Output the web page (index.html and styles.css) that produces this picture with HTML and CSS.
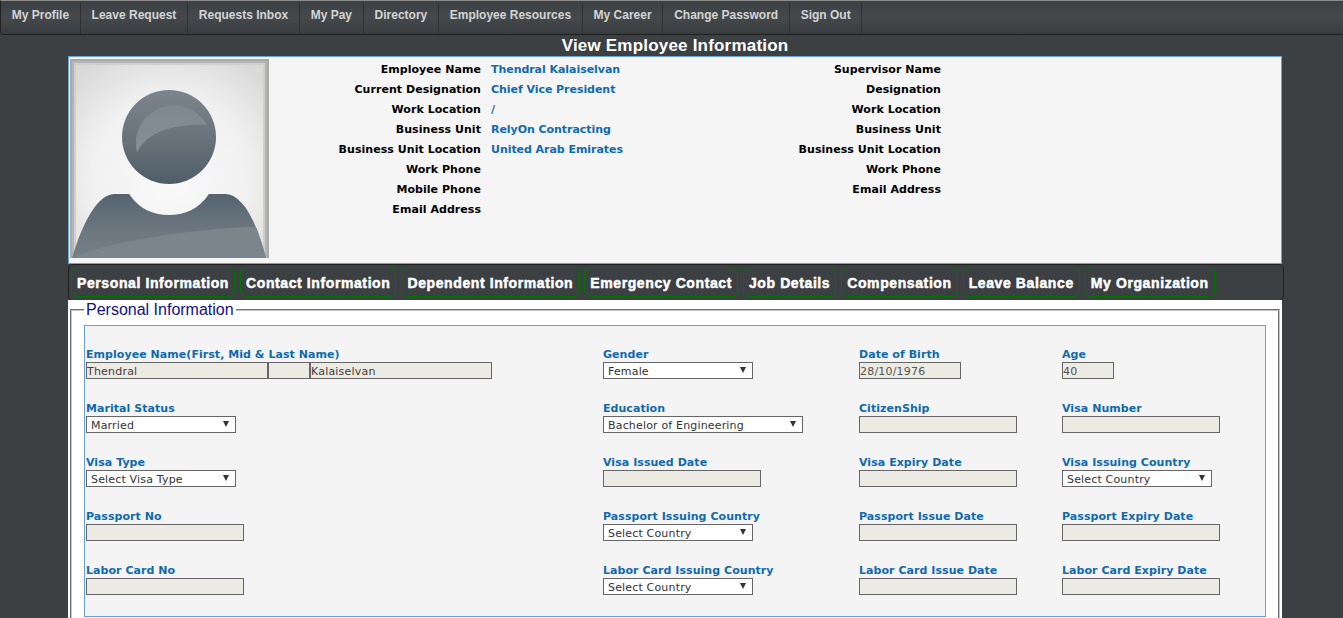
FILE: index.html
```html
<!DOCTYPE html>
<html lang="en">
<head>
<meta charset="utf-8">
<title>View Employee Information</title>
<link rel="stylesheet" href="styles.css">
</head>
<body>
<nav class="topnav">
  <a class="nav-item">My Profile</a>
  <a class="nav-item">Leave Request</a>
  <a class="nav-item">Requests Inbox</a>
  <a class="nav-item">My Pay</a>
  <a class="nav-item">Directory</a>
  <a class="nav-item">Employee Resources</a>
  <a class="nav-item">My Career</a>
  <a class="nav-item">Change Password</a>
  <a class="nav-item">Sign Out</a>
</nav>
<h1 class="page-title">View Employee Information</h1>
<main class="wrap">
  <section class="summary">
    <svg class="avatar" viewBox="0 0 199 199" role="img" aria-label="Employee photo placeholder">
      <defs>
        <radialGradient id="bg" cx="50%" cy="58%" r="70%">
          <stop offset="0" stop-color="#fafafa"/>
          <stop offset="0.6" stop-color="#f1f1f1"/>
          <stop offset="1" stop-color="#dadada"/>
        </radialGradient>
        <linearGradient id="head" x1="0" y1="0" x2="0" y2="1">
          <stop offset="0" stop-color="#7c858c"/>
          <stop offset="0.45" stop-color="#6b757d"/>
          <stop offset="1" stop-color="#505d68"/>
        </linearGradient>
        <linearGradient id="shine" x1="0" y1="0" x2="0" y2="1">
          <stop offset="0" stop-color="#7f8890"/>
          <stop offset="1" stop-color="#868f95"/>
        </linearGradient>
        <linearGradient id="body" x1="0" y1="0" x2="0" y2="1">
          <stop offset="0" stop-color="#56636e"/>
          <stop offset="0.6" stop-color="#6d7881"/>
          <stop offset="1" stop-color="#747e87"/>
        </linearGradient>
        <clipPath id="bodyClip">
          <path d="M2 199C14 160 28 136 44 135H59C70 151 84 156 99 156C114 156 128 151 139 135H156C172 136 186 160 196 199Z"/>
        </clipPath>
      </defs>
      <rect width="199" height="199" fill="#a9a9a7"/>
      <rect x="2" y="2" width="195" height="197" fill="#b5b5b4"/>
      <rect x="4" y="4" width="191" height="195" fill="#cfcfce"/>
      <rect x="6" y="6" width="187" height="193" fill="url(#bg)"/>
      <circle cx="99" cy="78" r="47" fill="url(#head)"/>
      <path d="M67 94C74 76 100 64 137 66A38 38 0 0 0 67 94Z" fill="url(#shine)"/>
      <path d="M2 199C14 160 28 136 44 135H59C70 151 84 156 99 156C114 156 128 151 139 135H156C172 136 186 160 196 199Z" fill="url(#body)"/>
      <path d="M0 199C50 180 120 170 199 167V199Z" fill="#7b858c" clip-path="url(#bodyClip)"/>
    </svg>
    <div class="info-list">
      <span class="info-label">Employee Name</span><span class="info-value">Thendral Kalaiselvan</span>
      <span class="info-label">Current Designation</span><span class="info-value">Chief Vice President</span>
      <span class="info-label">Work Location</span><span class="info-value">/</span>
      <span class="info-label">Business Unit</span><span class="info-value">RelyOn Contracting</span>
      <span class="info-label">Business Unit Location</span><span class="info-value">United Arab Emirates</span>
      <span class="info-label">Work Phone</span><span class="info-value"></span>
      <span class="info-label">Mobile Phone</span><span class="info-value"></span>
      <span class="info-label">Email Address</span><span class="info-value"></span>
    </div>
    <div class="info-list">
      <span class="info-label">Supervisor Name</span><span class="info-value"></span>
      <span class="info-label">Designation</span><span class="info-value"></span>
      <span class="info-label">Work Location</span><span class="info-value"></span>
      <span class="info-label">Business Unit</span><span class="info-value"></span>
      <span class="info-label">Business Unit Location</span><span class="info-value"></span>
      <span class="info-label">Work Phone</span><span class="info-value"></span>
      <span class="info-label">Email Address</span><span class="info-value"></span>
    </div>
  </section>
  <div class="tabs">
    <a class="tab">Personal Information</a>
    <a class="tab">Contact Information</a>
    <a class="tab">Dependent Information</a>
    <a class="tab">Emergency Contact</a>
    <a class="tab">Job Details</a>
    <a class="tab">Compensation</a>
    <a class="tab">Leave Balance</a>
    <a class="tab">My Organization</a>
  </div>
  <section class="panel">
    <fieldset class="group">
      <legend class="group-title">Personal Information</legend>
      <div class="form-grid">
        <div class="field">
          <label class="field-label">Employee Name(First, Mid &amp; Last Name)</label>
          <div class="name-row">
            <input class="text-input name-first" value="Thendral">
            <input class="text-input name-mid" value="">
            <input class="text-input name-last" value="Kalaiselvan">
          </div>
        </div>
        <div class="field"><label class="field-label">Gender</label><div class="select w150"><span>Female</span><i class="arrow"></i></div></div>
        <div class="field"><label class="field-label">Date of Birth</label><input class="text-input w102" value="28/10/1976"></div>
        <div class="field"><label class="field-label">Age</label><input class="text-input w52" value="40"></div>

        <div class="field"><label class="field-label">Marital Status</label><div class="select w150"><span>Married</span><i class="arrow"></i></div></div>
        <div class="field"><label class="field-label">Education</label><div class="select w200"><span>Bachelor of Engineering</span><i class="arrow"></i></div></div>
        <div class="field"><label class="field-label">CitizenShip</label><input class="text-input w158"></div>
        <div class="field"><label class="field-label">Visa Number</label><input class="text-input w158"></div>

        <div class="field"><label class="field-label">Visa Type</label><div class="select w150"><span>Select Visa Type</span><i class="arrow"></i></div></div>
        <div class="field"><label class="field-label">Visa Issued Date</label><input class="text-input w158"></div>
        <div class="field"><label class="field-label">Visa Expiry Date</label><input class="text-input w158"></div>
        <div class="field"><label class="field-label">Visa Issuing Country</label><div class="select w150"><span>Select Country</span><i class="arrow"></i></div></div>

        <div class="field"><label class="field-label">Passport No</label><input class="text-input w158"></div>
        <div class="field"><label class="field-label">Passport Issuing Country</label><div class="select w150"><span>Select Country</span><i class="arrow"></i></div></div>
        <div class="field"><label class="field-label">Passport Issue Date</label><input class="text-input w158"></div>
        <div class="field"><label class="field-label">Passport Expiry Date</label><input class="text-input w158"></div>

        <div class="field"><label class="field-label">Labor Card No</label><input class="text-input w158"></div>
        <div class="field"><label class="field-label">Labor Card Issuing Country</label><div class="select w150"><span>Select Country</span><i class="arrow"></i></div></div>
        <div class="field"><label class="field-label">Labor Card Issue Date</label><input class="text-input w158"></div>
        <div class="field"><label class="field-label">Labor Card Expiry Date</label><input class="text-input w158"></div>
      </div>
    </fieldset>
  </section>
</main>
</body>
</html>
```
FILE: styles.css
```css
* { box-sizing: border-box; }
html, body { height: 618px; overflow: hidden; }
body {
  margin: 0;
  background: #3c4043;
  font-family: "DejaVu Sans", Verdana, sans-serif;
  font-size: 11px;
}
.topnav {
  display: flex;
  height: 35px;
  padding-top: 1px;
  border-top: 1px solid #8c8c8c;
  border-left: 1px solid #222;
  border-bottom: 1px solid #1e2022;
  border-bottom-left-radius: 4px;
  background: linear-gradient(#3d4144, #46494c 50%, #393c3f);
}
.nav-item {
  display: flex;
  align-items: center;
  height: 32px;
  padding: 0 10.75px 6px;
  border-right: 1px solid #2f3234;
  font: bold 12px "Liberation Sans", Arial, sans-serif;
  color: #d2d4d6;
  white-space: nowrap;
}
.page-title {
  margin: 0;
  height: 21px;
  font: bold 17px/21px "Liberation Sans", Arial, sans-serif;
  letter-spacing: 0.2px;
  color: #fff;
  text-align: center;
  padding-left: 7px;
}
.wrap { margin: 0 61px 0 68px; }
.summary {
  display: flex;
  height: 208px;
  padding: 2px 0 0 1px;
  background: #f5f5f5;
  border: 1px solid #6aa3d9;
}
.avatar { flex: none; width: 199px; height: 199px; display: block; }
.info-list {
  display: grid;
  grid-template-columns: 212px 1fr;
  grid-auto-rows: 20px;
  column-gap: 10px;
  align-content: start;
  width: 460px;
  padding-top: 1px;
  line-height: 20px;
}
.info-label { color: #000; font-weight: bold; letter-spacing: 0.05px; text-align: right; white-space: nowrap; }
.info-value { color: #106ab0; font-weight: bold; letter-spacing: -0.05px; white-space: nowrap; }
.tabs {
  display: flex;
  gap: 5px;
  height: 37px;
  width: 1216px;
  padding: 2px 0 0 2px;
  background: #3c4043;
  border: 1px solid #1e2022;
  border-radius: 5px;
}
.tab {
  display: flex;
  align-items: center;
  height: 30px;
  padding: 1px 5px 0;
  border: 1px solid #007400;
  border-radius: 6px;
  font: bold 14px "Liberation Sans", Arial, sans-serif;
  -webkit-text-stroke: 0.5px #fff;
  letter-spacing: 0.6px;
  color: #fff;
  white-space: nowrap;
}
.panel {
  height: 320px;
  width: 1214px;
  padding: 0 2px;
  background: #fff;
}
.group {
  margin: -1px 0 0;
  padding: 0 12px;
  height: 330px;
  border: 2px groove #c4c4c4;
  min-width: 0;
}
.group-title {
  padding: 0 2px;
  margin-left: 0;
  font: 16px/19px "Liberation Sans", Arial, sans-serif;
  color: #10108a;
}
.form-grid {
  display: grid;
  grid-template-columns: 517px 256px 203px 1fr;
  grid-auto-rows: 54px;
  height: 292px;
  padding: 21px 1px 0;
  margin-top: 6px;
  background: #f4f4f4;
  border: 1px solid #6a9fd8;
}
.field { display: flex; flex-direction: column; align-items: flex-start; }
.field-label {
  height: 15px;
  line-height: 16px;
  font-weight: bold;
  color: #106ab0;
  letter-spacing: 0.05px;
  white-space: nowrap;
}
.name-row { display: flex; }
.text-input {
  display: block;
  height: 17px;
  margin: 0;
  padding: 1px 1px 0 0;
  background: #ebebe4;
  border: 1px solid #666;
  border-radius: 0;
  font: 11px "DejaVu Sans", Verdana, sans-serif;
  letter-spacing: 0.2px;
  color: #555;
  outline: 0;
}
.name-first { width: 182px; color: #4a3a3a; }
.name-mid { width: 42px; }
.name-last { width: 182px; color: #4a3a3a; }
.w52 { width: 52px; }
.w102 { width: 102px; }
.w158 { width: 158px; }
.select {
  position: relative;
  height: 17px;
  padding-left: 4px;
  background: #fff;
  border: 1px solid #666;
  line-height: 17px;
  letter-spacing: 0.17px;
  color: #333;
  white-space: nowrap;
}
.w150 { width: 150px; }
.w200 { width: 200px; }
.arrow {
  position: absolute;
  right: 6px;
  top: 4px;
  width: 0;
  height: 0;
  border-style: solid;
  border-width: 6px 3.5px 0;
  border-color: #333 transparent transparent;
}
```
